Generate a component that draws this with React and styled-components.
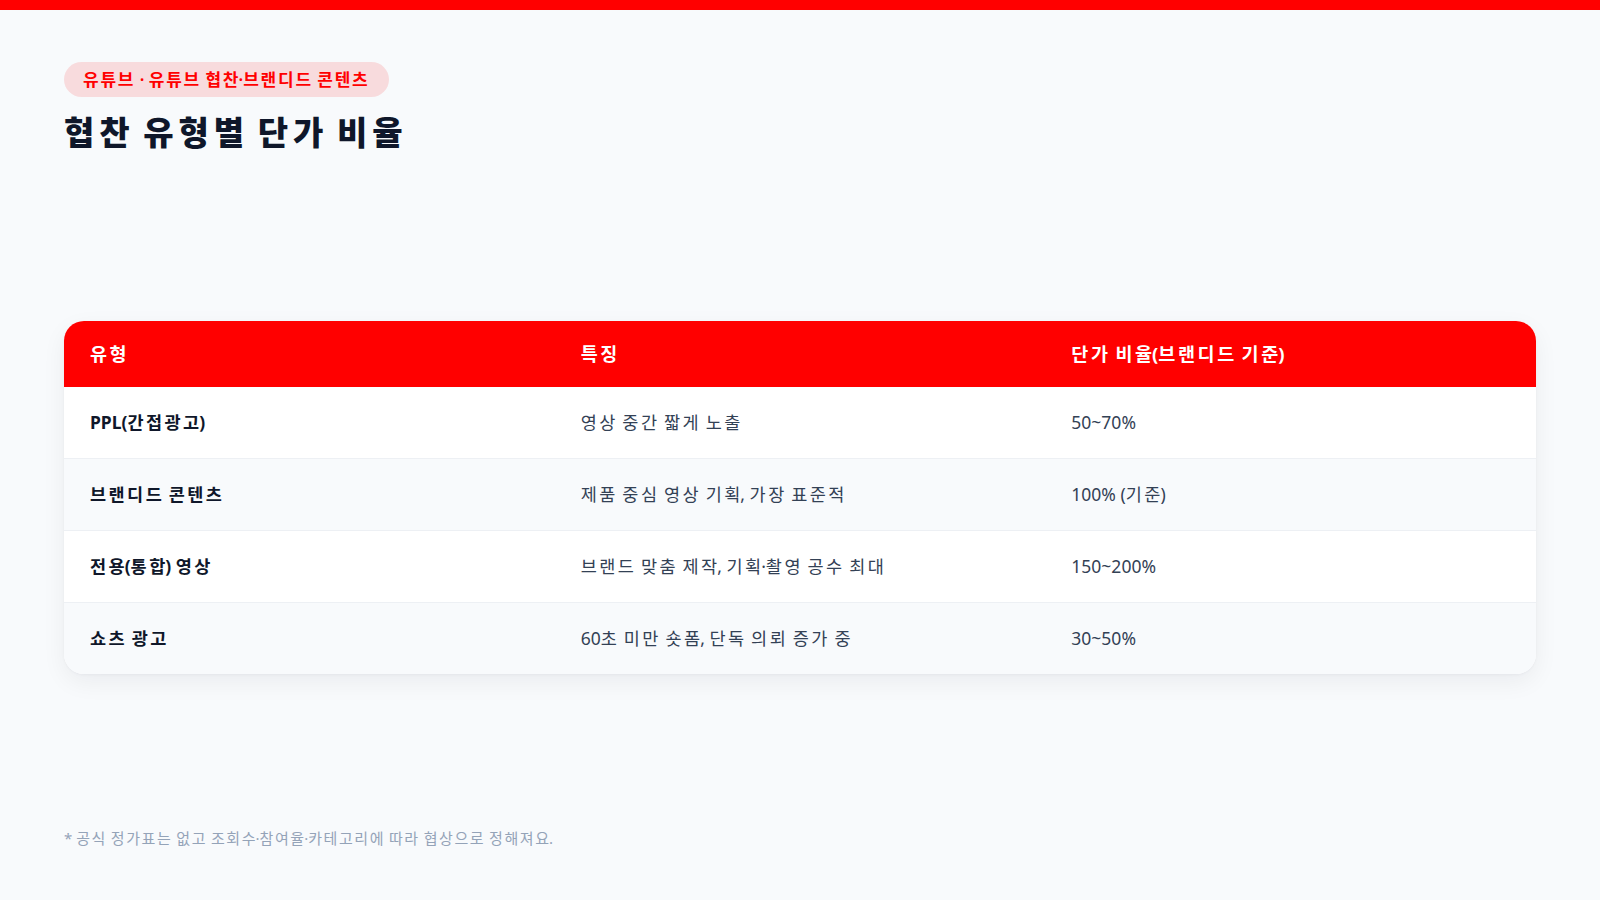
import React from "react";
import styled, { createGlobalStyle } from "styled-components";

const GlobalStyle = createGlobalStyle`
  * { box-sizing: border-box; }
  html, body { margin: 0; padding: 0; background: #f8fafc; }
  body {
    font-family: "Noto Sans", "Noto Sans CJK KR", "Liberation Sans", sans-serif;
    -webkit-font-smoothing: antialiased;
  }
`;

const Hangul = styled.span`
  letter-spacing: var(--ko-ls, 0.14em);
`;

const HANGUL_RUN = /([\uAC00-\uD7A3\u3131-\u318E]+)/;

function ko(text) {
  const parts = text.split(HANGUL_RUN);
  return parts.map((part, i) => {
    if (i % 2 === 0) return part;
    const next = parts[i + 1] || "";
    if (next.length && next[0] !== " " && part.length > 1) {
      return (
        <React.Fragment key={i}>
          <Hangul>{part.slice(0, -1)}</Hangul>
          {part.slice(-1)}
        </React.Fragment>
      );
    }
    if (next.length && next[0] !== " ") return part;
    return <Hangul key={i}>{part}</Hangul>;
  });
}

const Slide = styled.div`
  width: 1600px;
  height: 900px;
  display: flex;
  flex-direction: column;
  background: #f8fafc;
  border-top: 10px solid #ff0000;
`;

const Content = styled.main`
  flex: 1;
  display: flex;
  flex-direction: column;
  padding: 52px 64px 51px;
`;

const Header = styled.header`
  display: flex;
  flex-direction: column;
  align-items: flex-start;
  gap: 15px;
`;

const Badge = styled.span`
  display: inline-block;
  height: 35px;
  padding: 0 19px;
  border-radius: 999px;
  background: rgba(255, 0, 0, 0.12);
  color: #ff0000;
  font-size: 17px;
  font-weight: 600;
  line-height: 35px;
  white-space: nowrap;
  --ko-ls: 0.104em;
`;

const Title = styled.h1`
  margin: 0;
  font-size: 33px;
  line-height: 1.3;
  font-weight: 800;
  color: #0f172a;
  --ko-ls: 0.15em;
`;

const Middle = styled.section`
  flex: 1;
  display: flex;
  flex-direction: column;
  justify-content: center;
  padding-top: 13px;
`;

const Card = styled.div`
  background: #ffffff;
  border-radius: 20px;
  overflow: hidden;
  box-shadow: 0 8px 24px rgba(15, 23, 42, 0.06), 0 1px 3px rgba(15, 23, 42, 0.04);
`;

const Row = styled.div`
  display: grid;
  grid-template-columns: repeat(3, 1fr);
  background: ${(p) => (p.$head ? "#ff0000" : p.$alt ? "#f8fafc" : "#ffffff")};
  border-bottom: ${(p) => (p.$head || p.$last ? "none" : "1px solid #edf0f4")};
`;

const HeadCell = styled.div`
  padding: 19px 26px;
  font-size: 18.5px;
  line-height: 28px;
  font-weight: 700;
  color: #ffffff;
`;

const Cell = styled.div`
  padding: 23px 26px;
  font-size: 17.5px;
  line-height: 25px;
  font-weight: ${(p) => (p.$strong ? 700 : 400)};
  color: ${(p) => (p.$strong ? "#0f172a" : "#334155")};
`;

const Footnote = styled.p`
  margin: 0;
  font-size: 15px;
  line-height: 22.5px;
  color: #94a3b8;
  --ko-ls: 0.105em;
`;

const rows = [
  ["PPL(간접광고)", "영상 중간 짧게 노출", "50~70%"],
  ["브랜디드 콘텐츠", "제품 중심 영상 기획, 가장 표준적", "100% (기준)"],
  ["전용(통합) 영상", "브랜드 맞춤 제작, 기획·촬영 공수 최대", "150~200%"],
  ["쇼츠 광고", "60초 미만 숏폼, 단독 의뢰 증가 중", "30~50%"],
];

export default function App() {
  return (
    <>
      <GlobalStyle />
      <Slide>
        <Content>
          <Header>
            <Badge>{ko("유튜브 · 유튜브 협찬·브랜디드 콘텐츠")}</Badge>
            <Title>{ko("협찬 유형별 단가 비율")}</Title>
          </Header>
          <Middle>
            <Card>
              <Row $head>
                <HeadCell>{ko("유형")}</HeadCell>
                <HeadCell>{ko("특징")}</HeadCell>
                <HeadCell>{ko("단가 비율(브랜디드 기준)")}</HeadCell>
              </Row>
              {rows.map((r, i) => (
                <Row key={r[0]} $alt={i % 2 === 1} $last={i === rows.length - 1}>
                  <Cell $strong>{ko(r[0])}</Cell>
                  <Cell>{ko(r[1])}</Cell>
                  <Cell>{ko(r[2])}</Cell>
                </Row>
              ))}
            </Card>
          </Middle>
          <Footnote>{ko("* 공식 정가표는 없고 조회수·참여율·카테고리에 따라 협상으로 정해져요.")}</Footnote>
        </Content>
      </Slide>
    </>
  );
}
